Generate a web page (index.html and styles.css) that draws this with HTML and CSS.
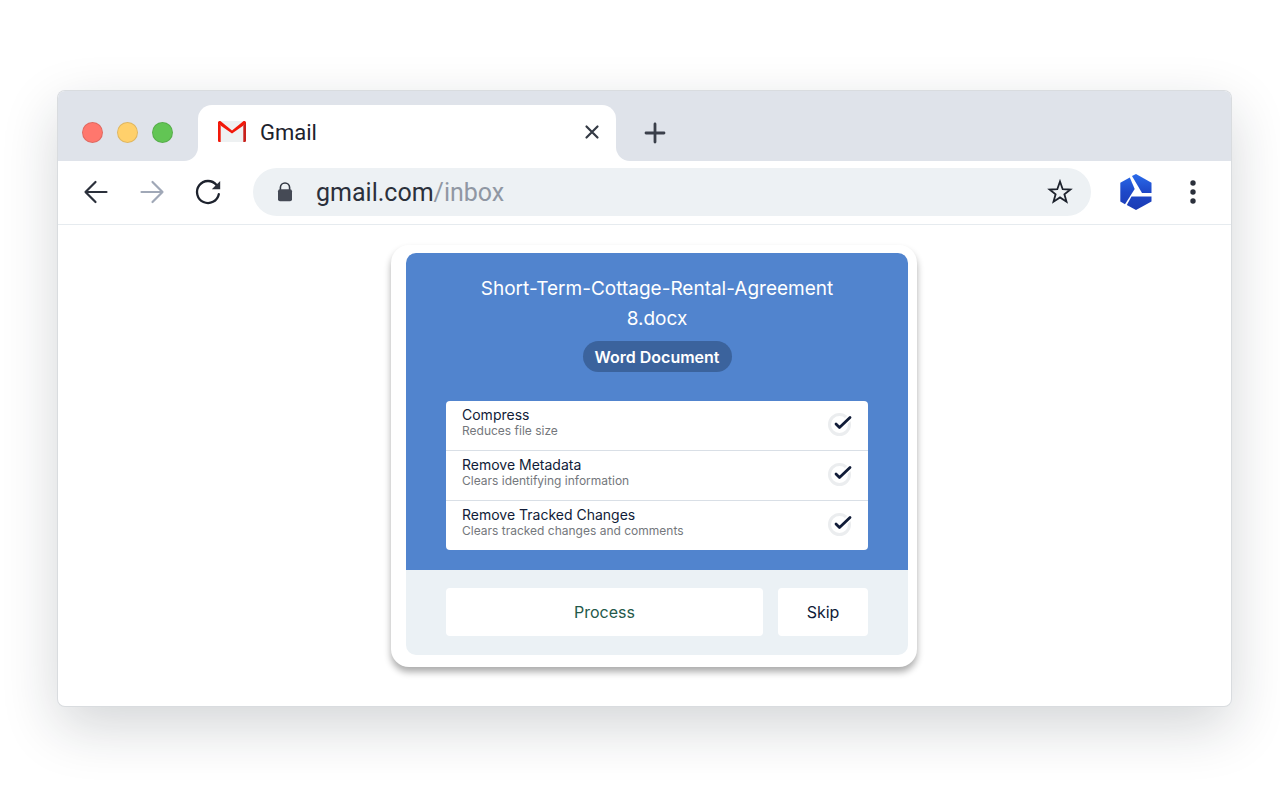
FILE: index.html
```html
<!DOCTYPE html>
<html lang="en">
<head>
    <meta charset="UTF-8">
    <meta name="viewport" content="width=device-width, initial-scale=1.0">
    <title>Gmail</title>
    <link rel="stylesheet" href="styles.css">
</head>
<body>
    <div class="browser">
        <header class="tab-strip">
            <div class="window-controls">
                <button class="dot red" aria-label="Close window"></button>
                <button class="dot yellow" aria-label="Minimize window"></button>
                <button class="dot green" aria-label="Zoom window"></button>
            </div>
            <div class="tab-wrap">
                <div class="tab">
                    <svg class="gmail-icon" width="28" height="22" viewBox="0 0 28 22">
                        <path fill="#eef1f2" d="M2 0h24v21H2z"/>
                        <path fill="#f2190a" d="M0 1.600C0 .2 1.800-.5 3 .5l11 8.900L25 .5c1.200-1 3-.3 3 1.100v1.200L14 12.600 0 2.800z"/>
                        <path fill="#f2190a" d="M0 1.600l2.700 3.200V21H1.200A1.200 1.200 0 0 1 0 19.800z"/>
                        <path fill="#c8201c" d="M28 1.600l-2.700 3.200V21h1.500a1.200 1.200 0 0 0 1.200-1.200z"/>
                    </svg>
                    <span class="tab-title">Gmail</span>
                    <button class="icon-btn" aria-label="Close tab">
                        <svg width="14" height="14" viewBox="0 0 14 14" fill="none" stroke="#343a45" stroke-width="2.200" stroke-linecap="round">
                            <path d="M1.500 1.500l11 11M12.500 1.500l-11 11"/>
                        </svg>
                    </button>
                </div>
            </div>
            <div class="strip-rest">
                <button class="icon-btn" aria-label="New tab">
                    <svg width="22" height="22" viewBox="0 0 22 22" fill="none" stroke="#3a3f4a" stroke-width="2.800" stroke-linecap="round">
                        <path d="M11 2v18M2 11h18"/>
                    </svg>
                </button>
            </div>
        </header>

        <nav class="toolbar">
            <div class="nav-buttons">
                <button class="icon-btn" aria-label="Back">
                    <svg width="24" height="24" viewBox="0 0 24 24" fill="none" stroke="#2b303b" stroke-width="2.200" stroke-linecap="round" stroke-linejoin="round">
                        <path d="M22.500 12H1.500M11.500 2L1.500 12l10 10"/>
                    </svg>
                </button>
                <button class="icon-btn" aria-label="Forward">
                    <svg width="24" height="24" viewBox="0 0 24 24" fill="none" stroke="#a0a8b7" stroke-width="2.200" stroke-linecap="round" stroke-linejoin="round">
                        <path d="M1.500 12h21M12.500 2l10 10-10 10"/>
                    </svg>
                </button>
                <button class="icon-btn" aria-label="Reload">
                    <svg width="24" height="24" viewBox="0 0 24 24" fill="none">
                        <path stroke="#1d222d" stroke-width="2.300" stroke-linecap="round" d="M22.800 14.200A11 11 0 1 1 20.500 5"/>
                        <path fill="#2b303b" d="M24.200 1v8.300h-8.400z"/>
                    </svg>
                </button>
            </div>
            <div class="address-bar">
                <svg width="16" height="20" viewBox="0 0 16 20">
                    <path fill="none" stroke="#343a45" stroke-width="1.600" d="M3.400 8V5.600a4.600 4.600 0 0 1 9.200 0V8"/>
                    <rect x="1" y="7.200" width="14" height="12" rx="2" fill="#454a55"/>
                </svg>
                <div class="url" role="textbox" contenteditable="true" spellcheck="false" aria-label="Address">gmail.com<span class="path">/inbox</span></div>
                <button class="icon-btn" aria-label="Bookmark">
                    <svg width="26" height="26" viewBox="0 0 26 26" fill="none" stroke="#1d222d" stroke-width="1.800">
                        <path d="M13 2.500l2.700 7.700 7.700.3-6 4.800 2.100 7.400-6.500-4.300-6.500 4.300 2.100-7.400-6-4.800 7.700-.3z"/>
                    </svg>
                </button>
            </div>
            <button class="icon-btn" aria-label="Extension">
                <svg width="32" height="36" viewBox="0 0 32 36">
                    <defs>
                        <linearGradient id="hex" gradientUnits="userSpaceOnUse" x1="0" y1="0" x2="0" y2="36">
                            <stop offset="0" stop-color="#2a6bea"/>
                            <stop offset=".5" stop-color="#1e48c8"/>
                            <stop offset="1" stop-color="#1b3bb4"/>
                        </linearGradient>
                    </defs>
                    <g fill="url(#hex)">
                        <path d="M12 2l4-2 15.500 8.700v10.300H22z"/>
                        <path d="M.3 8.700L9.800 3.400l4.900 11.600L5 30.300l-4.700-2.800z"/>
                        <path d="M11.500 22.500h20v4.900L16 36l-9.200-5z"/>
                    </g>
                </svg>
            </button>
            <button class="icon-btn" aria-label="Menu">
                <svg width="6" height="24" viewBox="0 0 6 24" fill="#2b303b">
                    <circle cx="3" cy="3" r="2.700"/>
                    <circle cx="3" cy="12" r="2.700"/>
                    <circle cx="3" cy="21" r="2.700"/>
                </svg>
            </button>
        </nav>

        <main class="page">
            <form class="card">
                <section class="card-top">
                    <h1>Short-Term-Cottage-Rental-Agreement 8.docx</h1>
                    <span class="badge">Word Document</span>
                    <div class="options">
                        <label class="option">
                            <span class="option-text">
                                <span class="name">Compress</span>
                                <span class="hint">Reduces file size</span>
                            </span>
                            <span class="check">
                                <input type="checkbox" checked>
                                <svg width="24" height="24" viewBox="0 0 24 24" fill="none" stroke-linecap="round" stroke-linejoin="round">
                                    <path stroke="#fff" stroke-width="6" d="M8 11l3.500 3.500L22 4.500"/>
                                    <path stroke="#111c38" stroke-width="2.800" d="M8 11l3.500 3.500L22 4.500"/>
                                </svg>
                            </span>
                        </label>
                        <label class="option">
                            <span class="option-text">
                                <span class="name">Remove Metadata</span>
                                <span class="hint">Clears identifying information</span>
                            </span>
                            <span class="check">
                                <input type="checkbox" checked>
                                <svg width="24" height="24" viewBox="0 0 24 24" fill="none" stroke-linecap="round" stroke-linejoin="round">
                                    <path stroke="#fff" stroke-width="6" d="M8 11l3.500 3.500L22 4.500"/>
                                    <path stroke="#111c38" stroke-width="2.800" d="M8 11l3.500 3.500L22 4.500"/>
                                </svg>
                            </span>
                        </label>
                        <label class="option">
                            <span class="option-text">
                                <span class="name">Remove Tracked Changes</span>
                                <span class="hint">Clears tracked changes and comments</span>
                            </span>
                            <span class="check">
                                <input type="checkbox" checked>
                                <svg width="24" height="24" viewBox="0 0 24 24" fill="none" stroke-linecap="round" stroke-linejoin="round">
                                    <path stroke="#fff" stroke-width="6" d="M8 11l3.500 3.500L22 4.500"/>
                                    <path stroke="#111c38" stroke-width="2.800" d="M8 11l3.500 3.500L22 4.500"/>
                                </svg>
                            </span>
                        </label>
                    </div>
                </section>
                <footer class="card-actions">
                    <button type="button" class="btn process">Process</button>
                    <button type="button" class="btn skip">Skip</button>
                </footer>
            </form>
        </main>
    </div>
</body>
</html>
```
FILE: styles.css
```css
* {
    box-sizing: border-box;
}
body {
    margin: 0;
    padding: 91px 49px 94px 58px;
    background-color: #fff;
    font-family: Inter, sans-serif;
    color: #111c38;
}
button {
    font-family: inherit;
    cursor: pointer;
    border: none;
}
svg {
    display: block;
    flex-shrink: 0;
    overflow: visible;
}
.browser {
    background-color: #fff;
    border-radius: 7px;
    box-shadow: 0 0 0 1px #d9dcdf, 0 20px 56px rgba(20, 30, 40, 0.19);
    overflow: hidden;
}
.icon-btn {
    padding: 0;
    background: none;
}

/* tabs */
.tab-strip {
    display: flex;
    height: 70px;
}
.window-controls {
    display: flex;
    align-items: center;
    gap: 14px;
    padding: 12px 24px 0;
    width: 140px;
    background-color: #dfe3ea;
    border-bottom-right-radius: 14px;
}
.dot {
    width: 21px;
    height: 21px;
    padding: 0;
    border: 1px solid rgba(0, 0, 0, 0.12);
    border-radius: 50%;
}
.red {
    background-color: #ff776d;
}
.yellow {
    background-color: #ffd06b;
}
.green {
    background-color: #62c554;
}
.tab-wrap {
    flex: 0 1 418px;
    padding-top: 14px;
    background-color: #dfe3ea;
}
.tab {
    display: flex;
    align-items: center;
    gap: 14px;
    height: 56px;
    padding: 0 17px 2px 20px;
    background-color: #fff;
    border-radius: 14px 14px 0 0;
}
.tab-title {
    flex: 1;
    font-family: Roboto, sans-serif;
    font-size: 22px;
    color: #1d222d;
}
.strip-rest {
    flex: 1;
    display: flex;
    align-items: center;
    padding: 14px 28px 0;
    background-color: #dfe3ea;
    border-bottom-left-radius: 14px;
}

/* address row */
.toolbar {
    display: flex;
    align-items: center;
    height: 64px;
    padding: 0 35px 1px 26px;
    border-bottom: 1px solid #e6ebef;
}
.nav-buttons {
    display: flex;
    align-items: center;
    gap: 32px;
    margin-right: 33px;
}
.address-bar {
    flex: 1;
    display: flex;
    align-items: center;
    height: 48px;
    margin-right: 29px;
    padding: 0 18px 0 24px;
    background-color: #edf1f4;
    border-radius: 24px;
}
.url {
    flex: 1;
    margin-left: 23px;
    font-family: Roboto, sans-serif;
    font-size: 25px;
    color: #2b303b;
    outline: none;
}
.path {
    color: #9097a3;
}
.toolbar > .icon-btn + .icon-btn {
    margin-left: 38px;
}

/* document card */
.page {
    display: flex;
    justify-content: center;
    padding: 20px 0 39px 19px;
}
.card {
    width: 526px;
    padding: 8px 9px 12px 15px;
    background-color: #fff;
    border-radius: 18px;
    box-shadow: 0 5px 7px rgba(0, 0, 0, 0.33);
}
.card-top {
    display: flex;
    flex-direction: column;
    align-items: center;
    padding: 20px 40px;
    background-color: #5184ce;
    border-radius: 10px 10px 0 0;
}
h1 {
    margin: 0;
    padding: 1px 20px 0;
    font-size: 19px;
    font-weight: 400;
    line-height: 30px;
    text-align: center;
    color: #fff;
}
.badge {
    margin: 7px 0 29px;
    padding: 1px 12px 0;
    font-size: 16px;
    font-weight: 600;
    line-height: 30px;
    color: #fff;
    background-color: #3b639d;
    border-radius: 16px;
}
.options {
    width: 100%;
    background-color: #fff;
    border-radius: 4px;
}
.option {
    box-sizing: content-box;
    display: flex;
    align-items: center;
    justify-content: space-between;
    height: 47px;
    padding: 0 16px 2px;
    cursor: pointer;
}
.option + .option {
    border-top: 1px solid #d9dfe6;
}
.option-text {
    display: flex;
    flex-direction: column;
    padding-bottom: 4px;
}
.name {
    font-size: 14px;
    line-height: 17px;
}
.hint {
    font-size: 12px;
    line-height: 16px;
    color: #74777c;
}
.check {
    display: grid;
    align-items: center;
}
.check input,
.check svg {
    grid-area: 1 / 1;
}
.check input {
    appearance: none;
    width: 23px;
    height: 23px;
    margin: 0;
    border: 3px solid #ebedef;
    border-radius: 50%;
}
.check input:not(:checked) + svg {
    visibility: hidden;
}
.card-actions {
    display: flex;
    gap: 15px;
    padding: 18px 40px 19px;
    background-color: #ebf1f5;
    border-radius: 0 0 10px 10px;
}
.btn {
    height: 48px;
    font-size: 16px;
    background-color: #fff;
    border-radius: 4px;
}
.process {
    flex: 1;
    color: #24594a;
}
.skip {
    width: 90px;
    color: #111c38;
}
```
